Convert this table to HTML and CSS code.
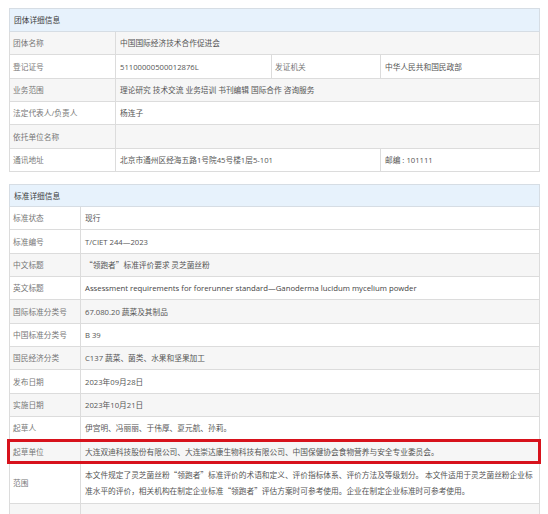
FILE: index.html
```html
<!DOCTYPE html>
<html lang="zh-CN">
<head>
<meta charset="utf-8">
<title>团体详细信息</title>
<link rel="stylesheet" href="styles.css">
</head>
<body>
<div class="page">
  <table class="grid org">
    <colgroup>
      <col class="o1"><col class="o2"><col class="o3"><col class="o4">
    </colgroup>
    <tr class="head"><th colspan="4">团体详细信息</th></tr>
    <tr class="alt"><td class="lab">团体名称</td><td colspan="3">中国国际经济技术合作促进会</td></tr>
    <tr><td class="lab">登记证号</td><td>51100000500012876L</td><td class="lab">发证机关</td><td>中华人民共和国民政部</td></tr>
    <tr class="alt"><td class="lab">业务范围</td><td colspan="3">理论研究 技术交流 业务培训 书刊编辑 国际合作 咨询服务</td></tr>
    <tr><td class="lab">法定代表人/负责人</td><td colspan="3">杨连子</td></tr>
    <tr class="alt"><td class="lab">依托单位名称</td><td colspan="3"></td></tr>
    <tr><td class="lab">通讯地址</td><td colspan="2">北京市通州区经海五路1号院45号楼1层5-101</td><td>邮编 : 101111</td></tr>
  </table>

  <div class="std-wrap">
    <table class="grid std">
      <colgroup>
        <col class="s1"><col class="s2">
      </colgroup>
      <tr class="head"><th colspan="2">标准详细信息</th></tr>
      <tr><td class="lab">标准状态</td><td>现行</td></tr>
      <tr><td class="lab">标准编号</td><td>T/CIET 244—2023</td></tr>
      <tr class="alt"><td class="lab">中文标题</td><td class="cjk">“领跑者”标准评价要求 灵芝菌丝粉</td></tr>
      <tr><td class="lab">英文标题</td><td class="en">Assessment requirements for forerunner standard—Ganoderma lucidum mycelium powder</td></tr>
      <tr class="alt"><td class="lab">国际标准分类号</td><td>67.080.20 蔬菜及其制品</td></tr>
      <tr><td class="lab">中国标准分类号</td><td>B 39</td></tr>
      <tr class="alt"><td class="lab">国民经济分类</td><td>C137 蔬菜、菌类、水果和坚果加工</td></tr>
      <tr><td class="lab">发布日期</td><td>2023年09月28日</td></tr>
      <tr class="alt"><td class="lab">实施日期</td><td>2023年10月21日</td></tr>
      <tr><td class="lab">起草人</td><td>伊宫明、冯丽丽、于伟厚、夏元航、孙莉。</td></tr>
      <tr class="alt"><td class="lab">起草单位</td><td>大连双迪科技股份有限公司、大连崇达康生物科技有限公司、中国保健协会食物营养与安全专业委员会。</td></tr>
      <tr class="tall"><td class="lab">范围</td><td class="multi cjk">本文件规定了灵芝菌丝粉“领跑者”标准评价的术语和定义、评价指标体系、评价方法及等级划分。 本文件适用于灵芝菌丝粉企业标准水平的评价，相关机构在制定企业标准“领跑者”评估方案时可参考使用。企业在制定企业标准时可参考使用。</td></tr>
      <tr class="alt"><td class="lab"></td><td></td></tr>
    </table>
    <div class="mark"></div>
  </div>
</div>
</body>
</html>
```

FILE: styles.css
```css
html, body {
  margin: 0;
  padding: 0;
  background: #ffffff;
}

.page {
  padding: 8px 0 0 9px;
  width: 530px;
  font-family: "Open Sans", "Noto Sans CJK SC", sans-serif;
  font-size: 7.7px;
  color: #555;
}

.grid {
  width: 530px;
  table-layout: fixed;
  border-collapse: collapse;
}

.grid th,
.grid td {
  border: 1px solid #dcdcdc;
  padding: 0 4px;
  text-align: left;
  vertical-align: middle;
  font-weight: normal;
  white-space: nowrap;
  overflow: hidden;
  line-height: 12px;
}

.grid tr {
  height: 23.35px;
  background: #ffffff;
}

.grid tr.alt {
  background: #f6f6f6;
}

.grid tr.head {
  height: 23px;
  background: #e7f2fc;
}

.grid tr.head th {
  color: #3a3a3a;
  border-color: #d6dde4;
}

.grid td.lab {
  color: #777;
  padding-left: 3px;
}

.grid td.cjk {
  font-family: "Noto Sans CJK SC", sans-serif;
}

.grid td.en {
  color: #444;
  font-size: 7.75px;
}

.org .o1 { width: 106px; }
.org .o2 { width: 156px; }
.org .o3 { width: 109px; }
.org .o4 { width: 159px; }

.std-wrap {
  position: relative;
  margin-top: 12px;
}

.std .s1 { width: 71px; }
.std .s2 { width: 459px; }

.std tr.head {
  height: 22px;
}

.std tr.tall {
  height: 40px;
}

.grid td.multi {
  white-space: normal;
  line-height: 16px;
  padding-top: 3px;
  padding-bottom: 3px;
}

.mark {
  position: absolute;
  left: -2px;
  top: 255px;
  width: 534px;
  height: 25px;
  box-sizing: border-box;
  border: 3px solid #d7121c;
  pointer-events: none;
}
```
